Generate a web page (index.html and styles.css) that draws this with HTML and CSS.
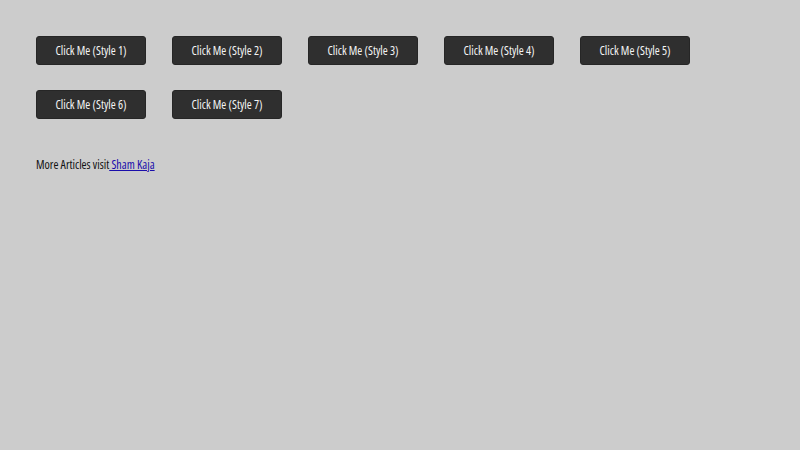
FILE: index.html
```
<!DOCTYPE html>
<html lang="en">
    <head>
        <title>Button Hover Styles</title>
        <meta charset="utf-8">
        <link rel="stylesheet" href="styles.css">
    </head>
    <body>
        <div class="botoes">
            <button class="btn style1">Click Me (Style 1)</button>
            <button class="btn style2">Click Me (Style 2)</button>
            <button class="btn style3">Click Me (Style 3)</button>
            <button class="btn style4">Click Me (Style 4)</button>
            <button class="btn style5">Click Me (Style 5)</button>
            <button class="btn style6">Click Me (Style 6)</button>
            <button class="btn style7">Click Me (Style 7)</button>
        </div>

        <p class="rodape">More Articles visit<a href="#"> Sham Kaja</a></p>
    </body>
</html>
```

FILE: styles.css
```
* {
    font-family: "Open Sans", sans-serif;
    font-stretch: 75%;
}
body {
    margin: 0px;
    padding: 36px 36px 0px 36px;
    background: #cccccc;
}
.botoes {
    display: flex;
    flex-wrap: wrap;
    gap: 25px 26px;
}
.btn {
    background: #2f2f2f;
    color: #f4f4f4;
    border: solid 1px #262626;
    border-radius: 3px;
    height: 29px;
    padding: 0px 18.5px;
    font-size: 12px;
    cursor: pointer;
}
.rodape {
    margin-top: 37px;
    font-size: 12px;
    color: #111111;
}
.rodape a {
    color: #1a0dab;
}
```
